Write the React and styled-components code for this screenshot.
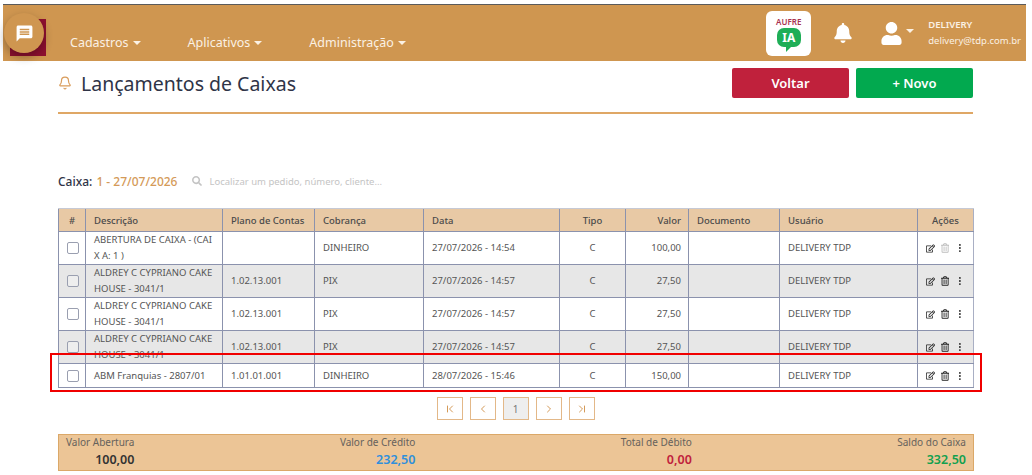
import React from 'react';
import styled, { createGlobalStyle } from 'styled-components';
import { MdMessage } from 'react-icons/md';
import { FaBell, FaUser, FaSearch, FaRegEdit, FaRegTrashAlt } from 'react-icons/fa';
import { BsThreeDotsVertical } from 'react-icons/bs';
import { ChevronFirst, ChevronLast, ChevronLeft, ChevronRight, Bell } from 'lucide-react';

const GlobalStyle = createGlobalStyle`
  html, body {
    margin: 0;
    padding: 0;
    background: #fff;
    overflow: hidden;
    font-family: 'Noto Sans', 'Open Sans', sans-serif;
  }
  * { box-sizing: border-box; }
`;

const Page = styled.div`
  position: relative;
  width: 1032px;
  height: 475px;
  padding: 4px 6px 0 3px;
  overflow: hidden;
`;

const Header = styled.header`
  height: 57px;
  background: #cf9650;
  border-top: 1px solid #5a5a5a;
  display: flex;
  align-items: center;
  padding: 0 5px 0 7px;
`;

const Logo = styled.div`
  width: 36px;
  height: 37px;
  margin-top: 9px;
  background: #8e1030;
`;

const Nav = styled.nav`
  display: flex;
  margin-left: 24px;
  margin-top: 19px;
  gap: 47px;
`;

const NavItem = styled.span`
  color: #fbf1e4;
  font-size: 12.5px;
  display: flex;
  align-items: center;
  gap: 4px;
  &::after {
    content: '';
    border-top: 4px solid #fbf1e4;
    border-left: 4px solid transparent;
    border-right: 4px solid transparent;
  }
`;

const HeaderRight = styled.div`
  margin-left: auto;
  display: flex;
  align-items: center;
`;

const AiBadge = styled.div`
  width: 45px;
  height: 45px;
  background: #fff;
  border-radius: 6px;
  display: flex;
  flex-direction: column;
  align-items: center;
  padding-top: 6px;
  margin-right: 22px;
`;

const AiName = styled.span`
  color: #a8324f;
  font-size: 8px;
  font-weight: 600;
  line-height: 9px;
`;

const AiBubble = styled.div`
  position: relative;
  margin-top: 2px;
  width: 24px;
  height: 19px;
  border-radius: 7px;
  background: #1fae57;
  color: #fff;
  font-size: 12px;
  font-weight: 700;
  line-height: 19px;
  text-align: center;
  &::after {
    content: '';
    position: absolute;
    left: 9px;
    bottom: -5px;
    border-top: 6px solid #1fae57;
    border-right: 6px solid transparent;
  }
`;

const UserBlock = styled.div`
  display: flex;
  align-items: center;
  margin-left: 27px;
  margin-right: 14px;
  color: #fff;
  &::after {
    content: '';
    margin-left: 3px;
    margin-bottom: 4px;
    border-top: 4px solid #fbf1e4;
    border-left: 4px solid transparent;
    border-right: 4px solid transparent;
  }
`;

const UserInfo = styled.div`
  color: #fbf1e4;
  font-size: 9.5px;
  line-height: 16px;
`;

const UserName = styled.div`
  font-weight: 600;
`;

const Fab = styled.div`
  position: absolute;
  left: 4px;
  top: 13px;
  width: 40px;
  height: 40px;
  border-radius: 50%;
  background: #cf9650;
  box-shadow: 0 4px 10px rgba(0, 0, 0, 0.3);
  display: flex;
  align-items: center;
  justify-content: center;
  color: #fff;
`;

const Main = styled.main`
  margin: 0 53px 0 55px;
`;

const TitleBar = styled.div`
  height: 53px;
  border-bottom: 2px solid #dfa765;
  display: flex;
  justify-content: space-between;
  padding-top: 7px;
`;

const Title = styled.h1`
  margin: 0;
  font-size: 19.5px;
  font-weight: 400;
  color: #2f3447;
  display: flex;
  align-items: center;
  gap: 9px;
  height: 30px;
  svg { color: #d99c5b; }
`;

const Buttons = styled.div`
  display: flex;
  gap: 7px;
`;

const ActionButton = styled.button`
  width: ${(p) => p.$w}px;
  height: 30px;
  border: 0;
  border-radius: 2px;
  background: ${(p) => p.$bg};
  color: #fff;
  font-family: inherit;
  font-size: 13px;
  font-weight: 600;
`;

const FilterRow = styled.div`
  margin-top: 57px;
  height: 20px;
  display: flex;
  align-items: center;
  font-size: 12px;
  font-weight: 500;
  color: #2f3447;
`;

const CashInfo = styled.span`
  color: #d49a58;
  margin-left: 4px;
`;

const Search = styled.div`
  margin-left: 15px;
  display: flex;
  align-items: center;
  gap: 7px;
  font-size: 9.5px;
  font-weight: 400;
  color: #c4c4c4;
`;

const Table = styled.table`
  margin-top: 17px;
  width: 916px;
  table-layout: fixed;
  border-collapse: collapse;
  font-size: 9.5px;
  color: #555;
  border: 1px solid #a9afc4;
`;

const Th = styled.th`
  height: 23px;
  padding: 0 ${(p) => (p.$align === 'right' ? '7px' : '8px')};
  background: #e8c9a5;
  color: #4a4a4a;
  font-weight: 500;
  text-align: ${(p) => p.$align || 'left'};
  border-left: 1px solid #8b92ad;
  border-bottom: 1px solid #8b92ad;
  border-top: 1px solid #c6c9d4;
`;

const Tr = styled.tr`
  background: ${(p) => (p.$shade ? '#e7e7e7' : '#fff')};
`;

const Td = styled.td`
  height: ${(p) => p.$h || 32}px;
  padding: 0 ${(p) => (p.$align === 'right' ? '7px' : '8px')};
  text-align: ${(p) => p.$align || 'left'};
  line-height: 16px;
  border-left: 1px solid #8b92ad;
  border-bottom: 1px solid #8b92ad;
  word-break: break-all;
`;

const Wrap = styled.span`
  word-break: normal;
`;

const Check = styled.span`
  display: block;
  margin: 0 auto;
  width: 12px;
  height: 12px;
  border: 1px solid #9a9fb0;
  border-radius: 2px;
  background: ${(p) => (p.$shade ? '#eee' : '#fff')};
`;

const Actions = styled.div`
  display: flex;
  align-items: center;
  gap: 6px;
  color: #222;
`;

const TrashIcon = styled(FaRegTrashAlt)`
  color: ${(p) => (p.$off ? '#bdbdbd' : '#222')};
`;

const Pager = styled.div`
  display: flex;
  justify-content: center;
  gap: 7px;
  margin-top: 9px;
`;

const PageButton = styled.div`
  width: 26px;
  height: 23px;
  border: 1px solid #e3b888;
  background: ${(p) => (p.$active ? '#eee' : '#fff')};
  color: ${(p) => (p.$active ? '#777' : '#d49a58')};
  font-size: 10px;
  display: flex;
  align-items: center;
  justify-content: center;
`;

const Summary = styled.div`
  margin-top: 14px;
  height: 37px;
  width: 916px;
  background: #ecc596;
  border: 1px solid #dba868;
  display: flex;
  justify-content: space-between;
  padding: 0 7px;
`;

const SummaryCol = styled.div`
  text-align: right;
`;

const SummaryLabel = styled.div`
  font-size: 10px;
  line-height: 14px;
  color: #66625c;
`;

const SummaryValue = styled.div`
  font-size: 12.5px;
  font-weight: 600;
  line-height: 21px;
  color: ${(p) => p.$color};
`;

const Highlight = styled.div`
  position: absolute;
  left: 50px;
  top: 353px;
  width: 932px;
  height: 39px;
  border: 2px solid #f00000;
`;

const columns = [
  { label: '#', width: 27, align: 'center' },
  { label: 'Descrição', width: 137 },
  { label: 'Plano de Contas', width: 92 },
  { label: 'Cobrança', width: 109 },
  { label: 'Data', width: 136 },
  { label: 'Tipo', width: 66, align: 'center' },
  { label: 'Valor', width: 63, align: 'right' },
  { label: 'Documento', width: 91 },
  { label: 'Usuário', width: 138 },
  { label: 'Ações', width: 56, align: 'center' },
];

const rows = [
  { desc: 'ABERTURA DE CAIXA - (CAIX A: 1 )', plano: '', cob: 'DINHEIRO', data: '27/07/2026 - 14:54', valor: '100,00', locked: true },
  { desc: 'ALDREY C CYPRIANO CAKE HOUSE - 3041/1', plano: '1.02.13.001', cob: 'PIX', data: '27/07/2026 - 14:57', valor: '27,50' },
  { desc: 'ALDREY C CYPRIANO CAKE HOUSE - 3041/1', plano: '1.02.13.001', cob: 'PIX', data: '27/07/2026 - 14:57', valor: '27,50' },
  { desc: 'ALDREY C CYPRIANO CAKE HOUSE - 3041/1', plano: '1.02.13.001', cob: 'PIX', data: '27/07/2026 - 14:57', valor: '27,50' },
  { desc: 'ABM Franquias - 2807/01', plano: '1.01.01.001', cob: 'DINHEIRO', data: '28/07/2026 - 15:46', valor: '150,00', h: 24 },
];

const App = () => {
  return (
    <Page>
      <GlobalStyle />
      <Header>
        <Logo />
        <Nav>
          <NavItem>Cadastros</NavItem>
          <NavItem>Aplicativos</NavItem>
          <NavItem>Administração</NavItem>
        </Nav>
        <HeaderRight>
          <AiBadge>
            <AiName>AUFRE</AiName>
            <AiBubble>IA</AiBubble>
          </AiBadge>
          <FaBell size={20} color="#fff" />
          <UserBlock>
            <FaUser size={23} />
          </UserBlock>
          <UserInfo>
            <UserName>DELIVERY</UserName>
            <div>delivery@tdp.com.br</div>
          </UserInfo>
        </HeaderRight>
      </Header>
      <Fab>
        <MdMessage size={19} />
      </Fab>
      <Main>
        <TitleBar>
          <Title>
            <Bell size={14} />
            Lançamentos de Caixas
          </Title>
          <Buttons>
            <ActionButton $w={117} $bg="#c0213c">Voltar</ActionButton>
            <ActionButton $w={117} $bg="#02a94f">+ Novo</ActionButton>
          </Buttons>
        </TitleBar>
        <FilterRow>
          Caixa:
          <CashInfo>1 - 27/07/2026</CashInfo>
          <Search>
            <FaSearch size={10} />
            Localizar um pedido, número, cliente...
          </Search>
        </FilterRow>
        <Table>
          <colgroup>
            {columns.map((c) => (
              <col key={c.label} width={c.width} />
            ))}
          </colgroup>
          <thead>
            <tr>
              {columns.map((c) => (
                <Th key={c.label} $align={c.align}>{c.label}</Th>
              ))}
            </tr>
          </thead>
          <tbody>
            {rows.map((r, i) => {
              const shade = i % 2 === 1;
              return (
                <Tr key={i} $shade={shade}>
                  <Td $h={r.h} $align="center"><Check $shade={shade} /></Td>
                  <Td $h={r.h}>{i === 0 ? r.desc : <Wrap>{r.desc}</Wrap>}</Td>
                  <Td $h={r.h}>{r.plano}</Td>
                  <Td $h={r.h}>{r.cob}</Td>
                  <Td $h={r.h}><Wrap>{r.data}</Wrap></Td>
                  <Td $h={r.h} $align="center">C</Td>
                  <Td $h={r.h} $align="right">{r.valor}</Td>
                  <Td $h={r.h} />
                  <Td $h={r.h}><Wrap>DELIVERY TDP</Wrap></Td>
                  <Td $h={r.h}>
                    <Actions>
                      <FaRegEdit size={11} />
                      <TrashIcon size={10} $off={r.locked} />
                      <BsThreeDotsVertical size={12} />
                    </Actions>
                  </Td>
                </Tr>
              );
            })}
          </tbody>
        </Table>
        <Pager>
          <PageButton><ChevronFirst size={12} /></PageButton>
          <PageButton><ChevronLeft size={12} /></PageButton>
          <PageButton $active>1</PageButton>
          <PageButton><ChevronRight size={12} /></PageButton>
          <PageButton><ChevronLast size={12} /></PageButton>
        </Pager>
        <Summary>
          <SummaryCol>
            <SummaryLabel>Valor Abertura</SummaryLabel>
            <SummaryValue $color="#333">100,00</SummaryValue>
          </SummaryCol>
          <SummaryCol>
            <SummaryLabel>Valor de Crédito</SummaryLabel>
            <SummaryValue $color="#2f8fdc">232,50</SummaryValue>
          </SummaryCol>
          <SummaryCol>
            <SummaryLabel>Total de Débito</SummaryLabel>
            <SummaryValue $color="#c0213c">0,00</SummaryValue>
          </SummaryCol>
          <SummaryCol>
            <SummaryLabel>Saldo do Caixa</SummaryLabel>
            <SummaryValue $color="#12a04f">332,50</SummaryValue>
          </SummaryCol>
        </Summary>
      </Main>
      <Highlight />
    </Page>
  );
};

export default App;
